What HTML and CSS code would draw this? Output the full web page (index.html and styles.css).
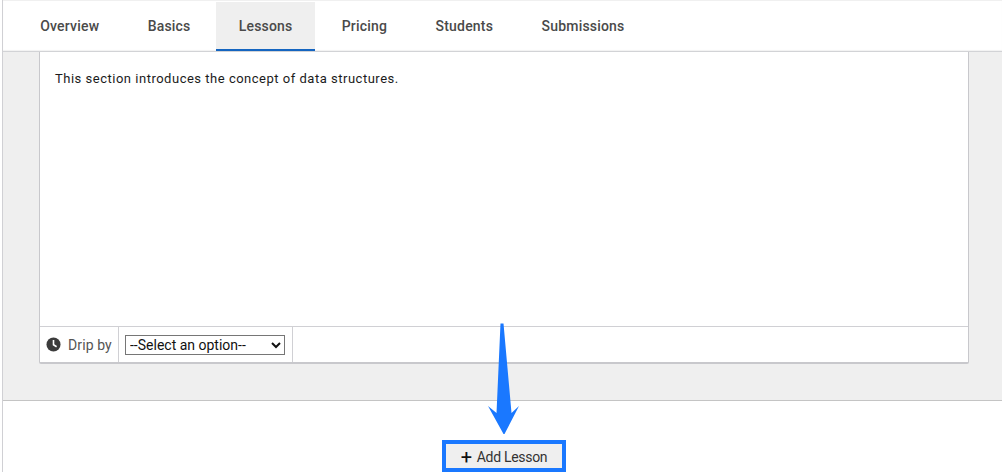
FILE: index.html
```html
<!DOCTYPE html>
<html lang="en">
<head>
<meta charset="utf-8">
<title>Lessons</title>
<link rel="stylesheet" href="styles.css">
</head>
<body>
<div class="page">
  <nav class="tabs">
    <a class="tab">Overview</a>
    <a class="tab">Basics</a>
    <a class="tab active">Lessons</a>
    <a class="tab">Pricing</a>
    <a class="tab">Students</a>
    <a class="tab">Submissions</a>
  </nav>
  <main class="panel">
    <section class="card">
      <div class="card-body">This section introduces the concept of data structures.</div>
      <div class="card-foot">
        <div class="drip-label">
          <svg class="clock" viewBox="0 0 16 16" width="15" height="15" aria-hidden="true">
            <circle cx="8" cy="8" r="7.5" fill="#3c3c3c"/>
            <path d="M8 3.2V8.3L11.3 10.4" fill="none" stroke="#fff" stroke-width="1.7"/>
          </svg>
          <span>Drip by</span>
        </div>
        <div class="drip-select">
          <select class="select">
            <option>--Select an option--</option>
          </select>
        </div>
      </div>
    </section>
  </main>
  <footer class="actions">
    <button class="add-btn" type="button"><span class="plus">+</span><span>Add Lesson</span></button>
  </footer>
</div>
<svg class="arrow" viewBox="0 0 32 112" width="32" height="112" aria-hidden="true">
  <path d="M12.5 0.5 L15.5 0.5 L23.5 90 L31 83 L16.5 111 L15.5 111 L0 83 L8.5 90 Z" fill="#1a78ff"/>
</svg>
</body>
</html>
```

FILE: styles.css
```css
* { box-sizing: border-box; }
html, body { margin: 0; padding: 0; }
body {
  width: 1002px;
  height: 472px;
  overflow: hidden;
  background: #fff;
  position: relative;
  font-family: Roboto, "Liberation Sans", sans-serif;
}
.page {
  margin-left: 2px;
  height: 472px;
  border-left: 1px solid #d0d0d4;
  display: flex;
  flex-direction: column;
}
.tabs {
  height: 52px;
  flex: none;
  display: flex;
  padding: 1px 0 1px 13px;
  background: #fff;
  border-top: 1px solid #f0f0f0;
  border-bottom: 1px solid #d2d3d6;
  box-shadow: 0 -1px 1px #f2f2f2 inset;
}
.tab {
  padding: 0 24.2px;
  line-height: 48px;
  height: 49px;
  font-size: 14px;
  font-weight: 500;
  letter-spacing: 0.2px;
  color: #4a4a4a;
}
.tab.active {
  background: #efefef;
  border-bottom: 2px solid #1565c0;
  padding: 0 22.5px 0 23px;
  margin: 0 2.5px 0 1px;
}
.panel {
  height: 349px;
  flex: none;
  background: #efefef;
  border-bottom: 1px solid #c4c4c4;
  padding: 0 33px 0 36px;
}
.card {
  height: 312px;
  background: #fff;
  border: 1px solid #c8c8cc;
  border-top: 0;
  border-bottom: 2px solid #c8c8cc;
  border-radius: 0 0 2px 2px;
  display: flex;
  flex-direction: column;
}
.card-body {
  flex: 1;
  padding: 18px 15px 0;
  font-size: 13px;
  line-height: 18px;
  letter-spacing: 0.51px;
  color: #1b1b1b;
}
.card-foot {
  height: 36px;
  flex: none;
  display: flex;
  border-top: 1px solid #d0d0d4;
}
.drip-label {
  width: 79px;
  display: flex;
  align-items: center;
  gap: 7px;
  padding-left: 6px;
  border-right: 1px solid #d0d0d4;
  font-size: 14px;
  letter-spacing: 0.1px;
  color: #555;
}
.clock { flex: none; }
.drip-select {
  width: 174px;
  display: flex;
  align-items: center;
  padding-left: 6px;
  border-right: 1px solid #d0d0d4;
}
.select {
  width: 160px;
  height: 20px;
  padding: 0;
  font-family: Roboto, "Liberation Sans", sans-serif;
  font-size: 14px;
  color: #111;
  background: #fff;
  border: 1px solid #767676;
  border-radius: 0;
}
.actions {
  flex: 1;
  display: flex;
  justify-content: center;
  align-items: flex-start;
  padding: 39px 0 0 0;
}
.add-btn {
  width: 124px;
  height: 32px;
  margin-left: 3px;
  background: #efefef;
  border: 4px solid #1a78ff;
  font-family: Roboto, "Liberation Sans", sans-serif;
  font-size: 14px;
  letter-spacing: -0.3px;
  color: #333;
  display: flex;
  align-items: center;
  justify-content: center;
  gap: 5px;
  padding: 2px 0 0 0;
}
.plus { font-size: 20px; line-height: 16px; color: #111; font-weight: 400; }
.arrow {
  position: absolute;
  left: 488px;
  top: 323px;
}
```
